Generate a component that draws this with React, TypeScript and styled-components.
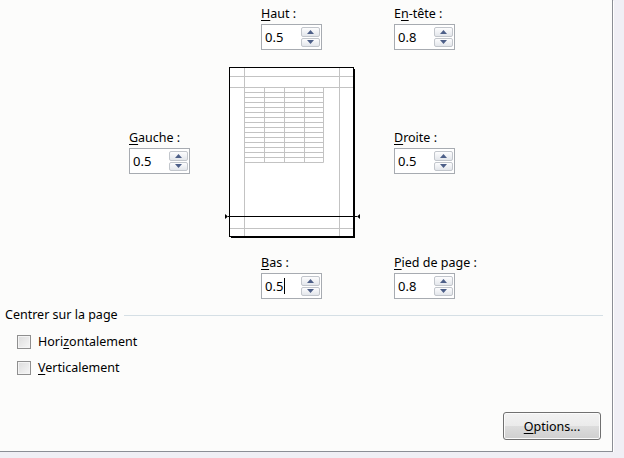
import React from 'react'
import styled, { createGlobalStyle } from 'styled-components'

const GlobalStyle = createGlobalStyle`
  html, body { margin: 0; padding: 0; background: #f0eff5; }
  body {
    font-family: 'Noto Sans', 'Segoe UI', sans-serif;
    font-size: 12.5px;
    color: #000;
  }
`

const Panel = styled.div`
  width: 612px;
  height: 451px;
  background: #fcfcfb;
  border-right: 1px solid #8b8e95;
  border-bottom: 1px solid #8b8e95;
  box-shadow: 1px 1px 0 #ffffff;
  display: flex;
  flex-direction: column;
`

const MarginsGrid = styled.div`
  display: grid;
  grid-template-columns: 94px 171px 1fr;
  grid-template-rows: 62px 180px auto;
  grid-template-areas:
    '. top header'
    'left preview right'
    '. bottom footer';
  padding-left: 129px;
`

const Field = styled.div<{ $area: string; $indent?: number; $top?: number; $center?: boolean }>`
  grid-area: ${({ $area }) => $area};
  align-self: ${({ $center }) => ($center ? 'center' : 'start')};
  margin-left: ${({ $indent }) => $indent || 0}px;
  margin-top: ${({ $top }) => $top || 0}px;
  display: flex;
  flex-direction: column;
  gap: 2px;
`

const Label = styled.div`
  line-height: 16px;
  height: 16px;
  white-space: nowrap;
`

const Key = styled.span`
  text-decoration: underline;
  text-underline-offset: 2px;
`

const SpinBox = styled.div`
  display: flex;
  width: 61px;
  height: 26px;
  box-sizing: border-box;
  border: 1px solid #a7abb1;
  background: #fff;
  padding: 2px 1px 2px 0;
`

const SpinValue = styled.div`
  flex: 1;
  display: flex;
  align-items: center;
  padding-left: 3px;
  line-height: 16px;
  font-size: 13px;
`

const Caret = styled.span`
  display: inline-block;
  width: 1px;
  height: 16px;
  background: #000;
  margin-left: 1px;
`

const SpinButtons = styled.div`
  display: flex;
  flex-direction: column;
  gap: 1px;
  width: 19px;
`

const SpinButton = styled.div`
  flex: 1;
  box-sizing: border-box;
  border: 1px solid #c2c6cc;
  border-radius: 2px;
  background: linear-gradient(#fdfdfe, #e3e6eb);
  display: flex;
  align-items: center;
  justify-content: center;
`

const PreviewBox = styled.div`
  grid-area: preview;
  width: 140px;
  height: 180px;
`

const Group = styled.div`
  margin-top: 8px;
  display: flex;
  flex-direction: column;
`

const GroupTitle = styled.div`
  display: flex;
  align-items: center;
  padding-left: 5px;
  padding-right: 9px;
  line-height: 16px;
`

const GroupLine = styled.div`
  flex: 1;
  height: 1px;
  background: #d5dfe5;
  margin-left: 6px;
`

const CheckList = styled.div`
  display: flex;
  flex-direction: column;
  gap: 12px;
  margin-top: 12px;
  padding-left: 17px;
`

const CheckRow = styled.label`
  display: flex;
  align-items: center;
  gap: 7px;
  height: 14px;
  line-height: 16px;
`

const CheckBox = styled.span`
  width: 14px;
  height: 14px;
  box-sizing: border-box;
  border: 1px solid #8f8f8f;
  background: linear-gradient(135deg, #dcdcdc, #f6f6f6);
  box-shadow: inset 0 0 0 1px #f4f4f4;
`

const ButtonBar = styled.div`
  margin-top: auto;
  display: flex;
  justify-content: flex-end;
  padding: 0 11px 11px 0;
`

const Button = styled.button`
  width: 98px;
  height: 28px;
  font: inherit;
  color: #000;
  border: 1px solid #707070;
  border-radius: 3px;
  background: linear-gradient(#f2f2f2 0%, #ebebeb 50%, #dddddd 50%, #cfcfcf 100%);
  box-shadow: inset 0 0 0 1px #fbfbfb;
  padding: 0;
`

const Arrow = ({ down }: { down?: boolean }) => (
  <svg width="7" height="4" viewBox="0 0 7 4">
    <polygon points={down ? '0,0 7,0 3.5,4' : '0,4 7,4 3.5,0'} fill="#4d5f88" />
  </svg>
)

type SpinProps = { value: string; caret?: boolean }

const Spin = ({ value, caret }: SpinProps) => (
  <SpinBox>
    <SpinValue>
      {value}
      {caret && <Caret />}
    </SpinValue>
    <SpinButtons>
      <SpinButton><Arrow /></SpinButton>
      <SpinButton><Arrow down /></SpinButton>
    </SpinButtons>
  </SpinBox>
)

const PagePreview = () => {
  const rows = Array.from({ length: 15 }, (_, i) => 30.5 + i * 5)
  const cols = [41.5, 61.5, 81.5, 100.5]
  return (
    <svg width="140" height="180" viewBox="0 0 140 180">
      <rect x="6.5" y="5.5" width="124" height="169" fill="#fff" />
      <g stroke="#c3c3c3" strokeWidth="1">
        <line x1="21.5" y1="5.5" x2="21.5" y2="174.5" />
        <line x1="116.5" y1="5.5" x2="116.5" y2="174.5" />
        <line x1="6.5" y1="14.5" x2="130.5" y2="14.5" />
        <line x1="6.5" y1="25.5" x2="130.5" y2="25.5" />
        <line x1="6.5" y1="166.5" x2="130.5" y2="166.5" />
        {rows.map((y) => (
          <line key={y} x1="21.5" y1={y} x2="100.5" y2={y} />
        ))}
        {cols.map((x) => (
          <line key={x} x1={x} y1="25.5" x2={x} y2="100.5" />
        ))}
      </g>
      <rect x="6.5" y="5.5" width="124" height="169" fill="none" stroke="#000" />
      <line x1="131.5" y1="7" x2="131.5" y2="176" stroke="#000" />
      <line x1="8" y1="175.5" x2="132" y2="175.5" stroke="#000" />
      <line x1="5" y1="154.5" x2="134" y2="154.5" stroke="#000" />
      <polygon points="2,152 5,154.5 2,157" fill="#000" />
      <polygon points="137,152 134,154.5 137,157" fill="#000" />
    </svg>
  )
}

export default function App() {
  return (
    <>
      <GlobalStyle />
      <Panel>
        <MarginsGrid>
          <Field $area="top" $indent={38} $top={6}>
            <Label><Key>H</Key>aut :</Label>
            <Spin value="0.5" />
          </Field>
          <Field $area="header" $top={6}>
            <Label>E<Key>n</Key>-tête :</Label>
            <Spin value="0.8" />
          </Field>
          <Field $area="left" $center>
            <Label><Key>G</Key>auche :</Label>
            <Spin value="0.5" />
          </Field>
          <PreviewBox>
            <PagePreview />
          </PreviewBox>
          <Field $area="right" $center>
            <Label><Key>D</Key>roite :</Label>
            <Spin value="0.5" />
          </Field>
          <Field $area="bottom" $indent={38} $top={13}>
            <Label><Key>B</Key>as :</Label>
            <Spin value="0.5" caret />
          </Field>
          <Field $area="footer" $top={13}>
            <Label><Key>P</Key>ied de page :</Label>
            <Spin value="0.8" />
          </Field>
        </MarginsGrid>
        <Group>
          <GroupTitle>
            Centrer sur la page
            <GroupLine />
          </GroupTitle>
          <CheckList>
            <CheckRow>
              <CheckBox />
              <span>Hori<Key>z</Key>ontalement</span>
            </CheckRow>
            <CheckRow>
              <CheckBox />
              <span><Key>V</Key>erticalement</span>
            </CheckRow>
          </CheckList>
        </Group>
        <ButtonBar>
          <Button><Key>O</Key>ptions...</Button>
        </ButtonBar>
      </Panel>
    </>
  )
}
